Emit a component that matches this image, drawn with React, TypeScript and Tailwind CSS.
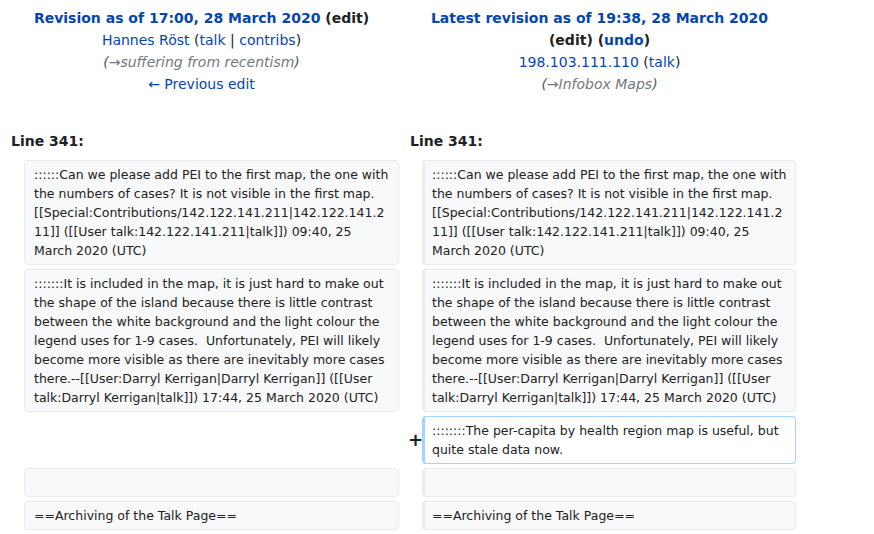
const link = 'text-[#0645ad]'

function Box({
  side,
  kind = 'context',
  children,
}: {
  side: 'left' | 'right'
  kind?: 'context' | 'added'
  children?: React.ReactNode
}) {
  const base =
    'rounded-[4px] border py-[4px] pr-[6px] text-[12.5px] leading-[19px] text-[#202122] whitespace-pre-wrap break-words min-h-[29px]'
  if (kind === 'added') {
    return (
      <div className={`${base} border-[#a3d3ff] border-l-[3px] pl-[7px] bg-white`}>
        {children}
      </div>
    )
  }
  return (
    <div
      className={`${base} border-[#eaecf0] bg-[#f8f9fa] ${
        side === 'left' ? 'pl-[9px]' : 'border-l-[3px] pl-[7px]'
      }`}
    >
      {children}
    </div>
  )
}

const firstComment =
  '::::::Can we please add PEI to the first map, the one with the numbers of cases? It is not visible in the first map. [[Special:Contributions/142.122.141.211|142.122.141.211]] ([[User talk:142.122.141.211|talk]]) 09:40, 25 March 2020 (UTC)'

const secondComment =
  ':::::::It is included in the map, it is just hard to make out the shape of the island because there is little contrast between the white background and the light colour the legend uses for 1-9 cases.  Unfortunately, PEI will likely become more visible as there are inevitably more cases there.--[[User:Darryl Kerrigan|Darryl Kerrigan]] ([[User talk:Darryl Kerrigan|talk]]) 17:44, 25 March 2020 (UTC)'

export default function App() {
  return (
    <div className="min-h-[534px] bg-white font-['DejaVu_Sans',sans-serif] text-[#202122]">
      <div className="grid w-[800px] grid-cols-[16px_375px_15px_374px] gap-[4px] p-[4px]">
        {/* header */}
        <div className="col-span-2 pt-[3px] text-center text-[14px] leading-[22px]">
          <div className="font-bold">
            <span className={link}>Revision as of 17:00, 28 March 2020</span>{' '}
            <span className="text-[#202122]">(edit)</span>
          </div>
          <div>
            <span className={link}>Hannes Röst</span> (<span className={link}>talk</span> |{' '}
            <span className={link}>contribs</span>)
          </div>
          <div className="italic text-[#54595d]">
            (<span className="text-[#72777d]">→suffering from recentism</span>)
          </div>
          <div className={link}>← Previous edit</div>
        </div>
        <div className="col-span-2 pt-[3px] text-center text-[14px] leading-[22px]">
          <div className="font-bold">
            <span className={link}>Latest revision as of 19:38, 28 March 2020</span>
            <br />
            (<span className="text-[#202122]">edit</span>) (<span className={link}>undo</span>)
          </div>
          <div>
            <span className={link}>198.103.111.110</span> (<span className={link}>talk</span>)
          </div>
          <div className="italic text-[#54595d]">
            (<span className="text-[#72777d]">→Infobox Maps</span>)
          </div>
        </div>

        {/* line numbers */}
        <div className="col-span-2 pl-[7px] pt-[31px] pb-[4px] text-[14px] font-bold leading-[22px]">
          Line 341:
        </div>
        <div className="col-span-2 pl-[7px] pt-[31px] pb-[4px] text-[14px] font-bold leading-[22px]">
          Line 341:
        </div>

        {/* row 1 */}
        <div />
        <Box side="left">{firstComment}</Box>
        <div />
        <Box side="right">{firstComment}</Box>

        {/* row 2 */}
        <div />
        <Box side="left">{secondComment}</Box>
        <div />
        <Box side="right">{secondComment}</Box>

        {/* added */}
        <div />
        <div />
        <div className="-mr-[5px] flex items-center justify-end text-[18px] font-bold leading-none text-[#202122]">
          +
        </div>
        <Box side="right" kind="added">
          ::::::::The per-capita by health region map is useful, but quite stale data now.
        </Box>

        {/* empty */}
        <div />
        <Box side="left" />
        <div />
        <Box side="right" />

        {/* heading */}
        <div />
        <Box side="left">==Archiving of the Talk Page==</Box>
        <div />
        <Box side="right">==Archiving of the Talk Page==</Box>
      </div>
    </div>
  )
}
